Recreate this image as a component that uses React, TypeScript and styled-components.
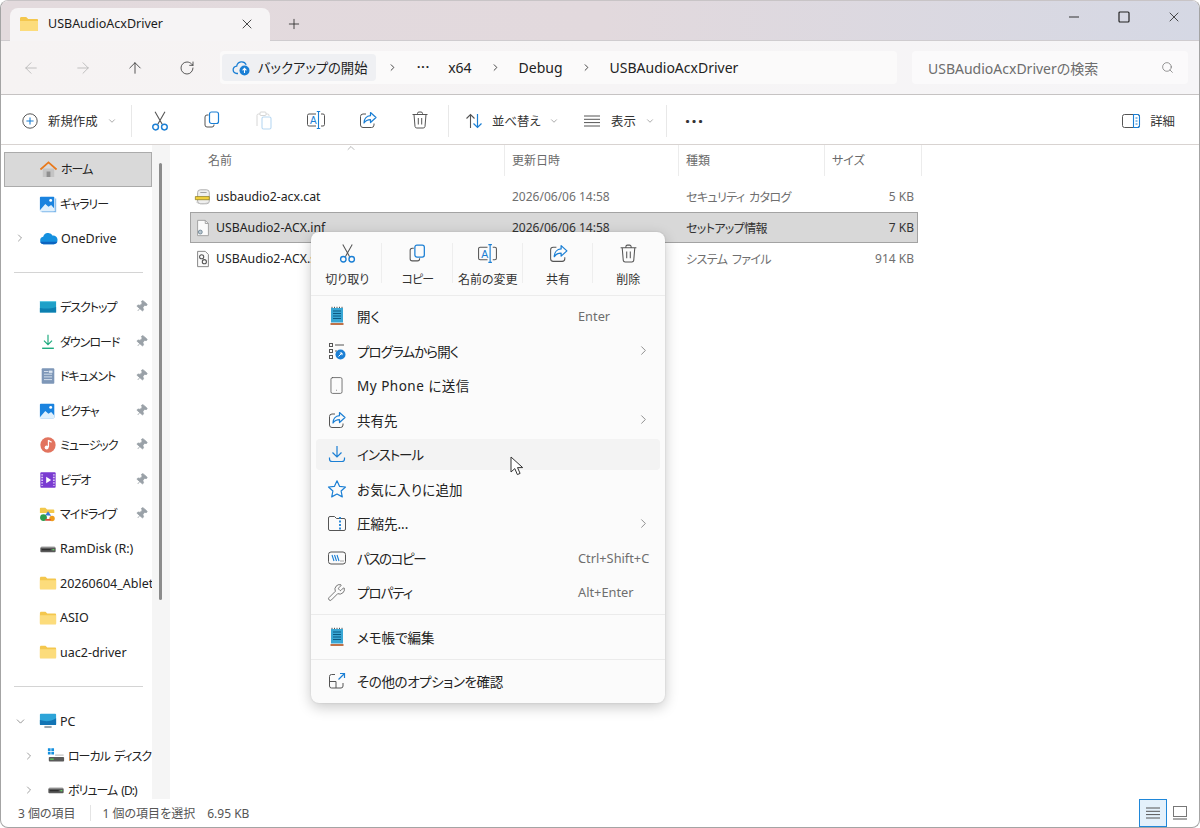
import React from "react";
import styled, { createGlobalStyle } from "styled-components";
import { ArrowLeft, ArrowRight, ArrowUp, RotateCw, Search, X, Plus, ChevronRight, ChevronDown, ChevronUp, Pin, Wrench, Smartphone } from "lucide-react";

const Global = createGlobalStyle`
  html, body { margin: 0; padding: 0; background: #fff; }
  body { font-family: "Noto Sans", "Noto Sans CJK JP", sans-serif; font-feature-settings: "palt"; color: #1c1c1c; }
  * { box-sizing: border-box; }
`;

const Win = styled.div`
  position: relative; width: 1200px; height: 828px; overflow: hidden; display: flex; flex-direction: column;
  border: 1px solid #a4a4a4; border-top-color: #c8c4c6; border-radius: 8px; background: #fff;
`;
const TitleBar = styled.div`
  height: 40px; flex: none; display: flex; align-items: flex-end; padding-left: 9px;
  background: linear-gradient(90deg, #e3dadd 0%, #e2d9dd 50%, #d5d8e4 100%);
  border-bottom: 1px solid #cfcccf;
`;
const Tab = styled.div`
  width: 260px; height: 33px; margin-bottom: -1px; display: flex; align-items: center; padding: 0 15px 2px 9px; gap: 9px;
  background: #f6f4f5; border-radius: 8px 8px 0 0; font-size: 12.5px;
`;
const TabTitle = styled.span` flex: 1; `;
const NewTab = styled.div` width: 34px; height: 33px; margin-left: 7px; display: flex; align-items: center; justify-content: center; color: #222; `;
const Spacer = styled.div` flex: 1; `;
const WinBtns = styled.div` align-self: flex-start; display: flex; height: 32px; `;
const WinBtn = styled.div` width: 50px; height: 32px; display: flex; align-items: center; justify-content: center; color: #222; `;

const AddrBar = styled.div`
  height: 54px; flex: none; display: flex; align-items: center; padding: 0 11px 0 4px;
  background: linear-gradient(90deg, #f6f3f3, #f6f5f7); border-bottom: 1px solid #c6c3c3;
`;
const NavBtn = styled.div<{ $off?: boolean }>`
  width: 52px; display: flex; justify-content: center; color: ${p => (p.$off ? "#b4b4b4" : "#333")};
`;
const Crumbs = styled.div`
  width: 677px; height: 33px; margin-left: 7px; display: flex; align-items: center; gap: 18px; padding-left: 2px;
  background: #fbfafa; border-radius: 4px; font-size: 14px; color: #222;
`;
const BackupPill = styled.div`
  width: 154px; height: 27px; margin-right: -7px; display: flex; align-items: center; gap: 6px; padding-left: 10px;
  background: #eff0f3; border-radius: 4px; font-size: 13.3px;
`;
const Dots = styled.span` font-weight: 700; letter-spacing: 1px; font-size: 12px; line-height: 1; padding-bottom: 2px; margin-left: 1px; `;
const SearchBox = styled.div`
  width: 276px; height: 33px; margin-left: 15px; display: flex; align-items: center; justify-content: space-between; padding: 0 14px 0 16px;
  background: #fbfafb; border-radius: 4px; font-size: 14px; color: #6d6d6d;
`;

const CmdBar = styled.div`
  height: 50px; flex: none; display: flex; align-items: center; padding: 2px 24px 0 11px;
  background: #fff; border-bottom: 1px solid #d8d3d1; font-size: 12.4px; color: #333;
`;
const CmdSep = styled.div` width: 1px; height: 32px; background: #e8e8e8; flex: none; `;
const CmdLabeled = styled.div<{ $w: number; $pl: number; $gap: number }>`
  width: ${p => p.$w}px; padding-left: ${p => p.$pl}px; display: flex; align-items: center; gap: ${p => p.$gap}px; flex: none;
`;
const CmdIconBtn = styled.div` width: 52px; flex: none; display: flex; justify-content: center; `;
const IconRun = styled.div` display: flex; padding: 0 2px; `;
const MoreBtn = styled.div` margin-left: 18px; font-size: 18px; font-weight: 700; letter-spacing: 1.5px; line-height: 1; `;
const SmallChev = styled.span` color: #9a9a9a; display: flex; `;
const Details = styled.div` display: flex; align-items: center; gap: 9px; `;

const Main = styled.div` flex: 1; min-height: 0; display: flex; `;
const Sidebar = styled.div`
  width: 151px; flex: none; overflow: hidden; padding-top: 7px; padding-left: 3px; font-size: 12.5px; color: #222;
`;
const SideRow = styled.div<{ $sel?: boolean; $indent?: boolean }>`
  position: relative; height: 34.5px; display: flex; align-items: center; white-space: nowrap;
  padding-left: ${p => (p.$indent ? 42 : 34)}px; gap: 3px;
  background: ${p => (p.$sel ? "#d9d9d9" : "transparent")};
  border: ${p => (p.$sel ? "1px solid #ababab" : "1px solid transparent")};
`;
const SideLabel = styled.span<{ $jp?: boolean }>`
  font-size: ${p => (p.$jp ? 12 : 12.5)}px; letter-spacing: ${p => (p.$jp ? "-1px" : "0")}; word-spacing: ${p => (p.$jp ? "2px" : "0")};
`;
const SideChev = styled.span<{ $indent?: boolean }>`
  position: absolute; left: ${p => (p.$indent ? 18 : 9)}px; top: 10px; display: flex; color: #777;
`;
const SidePin = styled.span`
  position: absolute; right: 3px; top: 9px; display: flex; color: #9aa1a8; transform: rotate(40deg);
`;
const SideSepRow = styled.div` height: 34.5px; display: flex; align-items: center; padding: 0 8px 0 10px; margin-right: 1px; `;
const SideLine = styled.div` flex: 1; height: 1px; background: #d4d4d4; `;
const ScrollStrip = styled.div` width: 18px; flex: none; background: #f5f5f5; padding: 18px 0 0 7px; `;
const Thumb = styled.div` width: 3px; height: 437px; background: #8b8b8b; border-radius: 2px; `;

const Content = styled.div` flex: 1; padding-left: 20px; font-size: 12px; color: #6b6b6b; `;
const HeadGrid = styled.div`
  position: relative; display: grid; grid-template-columns: 315px 174px 146px 97px; width: 732px; height: 32px;
`;
const HeadCell = styled.div<{ $first?: boolean }>`
  display: flex; align-items: center; height: 31px; padding-left: ${p => (p.$first ? 18 : 7)}px; border-right: 1px solid #ececec; padding-bottom: 2px;
`;
const SortMark = styled.span` position: absolute; left: 155px; top: -3px; display: flex; color: #888; `;
const FileRow = styled.div<{ $sel?: boolean }>`
  display: grid; grid-template-columns: 315px 174px 146px 93px; width: 728px; height: 31px; align-items: center;
  background: ${p => (p.$sel ? "#d8d8d8" : "transparent")};
  outline: ${p => (p.$sel ? "1px solid #a3a3a3" : "none")}; outline-offset: -1px;
  color: ${p => (p.$sel ? "#333" : "#6f6f6f")};
`;
const FileName = styled.div` display: flex; align-items: center; gap: 4px; padding-left: 4px; font-size: 12.3px; color: #222; white-space: nowrap; `;
const Cell = styled.div` padding-left: 7px; white-space: nowrap; `;
const TypeCell = styled(Cell)` letter-spacing: -.6px; word-spacing: 2px; `;
const SizeCell = styled.div` text-align: right; padding-right: 4px; `;
const RowsTop = styled.div` padding-top: 4px; `;

const StatusBar = styled.div`
  height: 28px; flex: none; display: flex; align-items: center; padding-left: 17px; font-size: 12px; color: #555;
`;
const StatusSep = styled.div` width: 1px; height: 16px; background: #e4e4e4; margin: 0 12px 0 14px; `;
const StatusGap = styled.span` margin-left: 12px; `;
const ViewGroup = styled.div` margin-left: auto; display: flex; align-items: center; margin-right: 12px; gap: 6px; height: 28px; `;
const ViewOn = styled.div`
  width: 28px; height: 28px; display: flex; align-items: center; justify-content: center;
  background: #e4f1fb; border: 1px solid #1f87d9;
`;

const Menu = styled.div`
  position: absolute; left: 310px; top: 231px; width: 354px; height: 471px; display: flex; flex-direction: column;
  background: #fbfbfb; border-radius: 8px; box-shadow: 0 4px 14px rgba(0,0,0,.22), 0 0 2px rgba(0,0,0,.12); font-size: 13.5px; color: #222;
`;
const MenuTop = styled.div` height: 64px; flex: none; display: flex; padding: 0 1px; border-bottom: 1px solid #ececec; `;
const TopBtn = styled.div<{ $sep?: boolean }>`
  position: relative; width: 70.3px; display: flex; flex-direction: column; align-items: center; padding-top: 11px; gap: 6px;
  font-size: 12px; color: #333;
  &::after { content: ""; display: ${p => (p.$sep ? "block" : "none")}; position: absolute; right: 0; top: 11px; width: 1px; height: 40px; background: #eeeeee; }
`;
const TopLabel = styled.span<{ $ls?: number }>` letter-spacing: ${p => p.$ls ?? 0}px; `;
const MenuList = styled.div` padding-top: 3px; `;
const MenuItem = styled.div<{ $hover?: boolean }>`
  height: 34.5px; margin: 0 5px; padding: 0 12px 0 11px; display: flex; align-items: center; gap: 11px; position: relative; border-radius: 4px;
  &::before { content: ""; display: ${p => (p.$hover ? "block" : "none")}; position: absolute; left: 0; right: 0; top: 2px; bottom: 2px; background: #f3f3f3; border-radius: 4px; }
  & > * { position: relative; }
`;
const MenuIconBox = styled.span` width: 19px; height: 20px; display: flex; align-items: center; justify-content: center; flex: none; `;
const MenuLabel = styled.span<{ $ls?: number }>` flex: 1; letter-spacing: ${p => p.$ls ?? 0}px; `;
const Shortcut = styled.span` font-size: 12.8px; color: #6e6e6e; width: 92px; padding-left: 12px; margin-right: -10px; white-space: nowrap; `;
const ChevBox = styled.span` color: #808080; display: flex; margin-right: -3px; `;
const MenuSep = styled.div` height: 1px; background: #ebebeb; margin: 4.5px 0; `;
const CursorMark = styled.svg` position: absolute; left: 509px; top: 455px; `;

const Ic = styled.svg.attrs<{ $s?: number }>(p => ({ width: p.$s ?? 20, height: p.$s ?? 20, viewBox: "0 0 20 20", fill: "none" }))<{ $s?: number }>`
  display: block; flex: none;
`;

type IP = { s?: number };
const B = "#1b7fd4";
const G = "#555";

const FolderI = ({ s = 18 }: IP) => (
  <Ic $s={s}><path d="M1 4.500C1 3.700 1.600 3 2.400 3h4.800l2 2H18c.6 0 1 .4 1 1v10c0 .6-.4 1-1 1H2c-.6 0-1-.4-1-1z" fill="#f4c74e" /><path d="M1 7h18v9c0 .6-.4 1-1 1H2c-.6 0-1-.4-1-1z" fill="#fcdc7c" /></Ic>
);
const BackupI = () => (
  <Ic $s={20}><path d="M6 15.500H5a3.700 3.700 0 0 1-.3-7.400A5 5 0 0 1 14.200 6.800" stroke={B} strokeWidth="1.300" /><circle cx="12.500" cy="12.500" r="5" fill={B} /><path d="M12.500 15V10.500M10.600 12.300l1.900-1.900 1.900 1.900" stroke="#fff" strokeWidth="1.100" /></Ic>
);
const CutI = ({ s = 22 }: IP) => (
  <Ic $s={s}><path d="M5.500 1.500 12 13M14.500 1.500 8 13" stroke="#555" strokeWidth="1" /><circle cx="6" cy="15.500" r="2.600" stroke={B} strokeWidth="1.300" /><circle cx="14" cy="15.500" r="2.600" stroke={B} strokeWidth="1.300" /></Ic>
);
const CopyI = ({ s = 20 }: IP) => (
  <Ic $s={s}><path d="M6.500 5H5a2 2 0 0 0-2 2v8a2 2 0 0 0 2 2h5a2 2 0 0 0 2-2v-.5" stroke="#555" strokeWidth="1" /><rect x="7.500" y="2" width="9" height="11.500" rx="2" stroke={B} strokeWidth="1.200" /></Ic>
);
const PasteI = ({ s = 20 }: IP) => (
  <Ic $s={s}><path d="M6 4H4.500A1.500 1.500 0 0 0 3 5.500V16" stroke="#d6d6d6" strokeWidth="1" /><rect x="6" y="2" width="6" height="3.500" rx="1" stroke="#d6d6d6" /><path d="M12 4h1.500A1.500 1.500 0 0 1 15 5.500V6" stroke="#d6d6d6" /><rect x="8" y="7" width="9" height="12" rx="1.500" stroke="#b8d8f2" strokeWidth="1.100" /></Ic>
);
const GlyphA = styled.text` font-family: "Liberation Sans", sans-serif; font-size: 10px; fill: #1b7fd4; `;
const RenameI = ({ s = 20 }: IP) => (
  <Ic $s={s}><path d="M10 4H3a1.500 1.500 0 0 0-1.500 1.500v9A1.500 1.500 0 0 0 3 16h7M15 4h2a1.500 1.500 0 0 1 1.500 1.500v9A1.500 1.500 0 0 1 17 16h-2" stroke="#555" strokeWidth="1" /><GlyphA x="4" y="14">A</GlyphA><path d="M12.500 1.500v17M10.800 1.500h3.400M10.800 18.500h3.400" stroke={B} strokeWidth="1.100" /></Ic>
);
const ShareI = ({ s = 20 }: IP) => (
  <Ic $s={s}><path d="M8 4H5a2.500 2.500 0 0 0-2.500 2.500v8.500A2.500 2.500 0 0 0 5 17.500h8.500A2.500 2.500 0 0 0 16 15v-1.500" stroke="#555" strokeWidth="1" /><path d="M12.500 2.500 18 7.500l-5.500 5V9.700c-3 0-5 1-6.500 3.300 0-4 2.500-7 6.500-7.300z" stroke={B} strokeWidth="1.200" strokeLinejoin="round" /></Ic>
);
const TrashI = ({ s = 20 }: IP) => (
  <Ic $s={s}><path d="M2.500 4.500h15M7.500 4.500V3.500a1.500 1.500 0 0 1 1.500-1.500h2a1.500 1.500 0 0 1 1.500 1.500v1M4 4.500l1 12a1.800 1.800 0 0 0 1.800 1.500h6.400a1.800 1.800 0 0 0 1.800-1.500l1-12M8.300 8v6.500M11.700 8v6.500" stroke="#555" strokeWidth="1" /></Ic>
);
const PlusCircle = () => (
  <Ic $s={18}><circle cx="10" cy="10" r="8" stroke="#555" strokeWidth="1.100" /><path d="M10 6v8M6 10h8" stroke={B} strokeWidth="1.200" /></Ic>
);
const SortI = () => (
  <Ic $s={20}><path d="M6.500 17V3.500M2.500 7.500l4-4 4 4" stroke="#555" strokeWidth="1.100" /><path d="M13.500 3v13.500M9.500 12.500l4 4 4-4" stroke={B} strokeWidth="1.200" /></Ic>
);
const LinesI = () => (
  <Ic $s={20}><path d="M2 5h16M2 8.300h16M2 11.600h16M2 15h16" stroke="#555" strokeWidth="1" /></Ic>
);
const DetailsI = () => (
  <Ic $s={20}><rect x="1.500" y="3.500" width="17" height="13" rx="2" stroke="#555" strokeWidth="1" /><path d="M12.500 3.500H16.500a2 2 0 0 1 2 2v9a2 2 0 0 1-2 2h-4z" stroke={B} strokeWidth="1.100" /><path d="M14.500 7h2M14.500 10h2M14.500 13h2" stroke={B} /></Ic>
);
const NotepadI = () => (
  <Ic $s={20}><rect x="4" y="2" width="12" height="14.500" fill="#39a6d4" /><path d="M6 5h8M6 7.500h8M6 10h8M6 12.500h8" stroke="#0b5a83" strokeWidth="1" /><path d="M5 2V.8M7.500 2V.8M10 2V.8M12.500 2V.8M15 2V.8" stroke="#555" /><path d="M3.500 18h13" stroke="#b2501c" strokeWidth="1.600" /></Ic>
);
const OpenWithI = () => (
  <Ic $s={20}><rect x="2.500" y="2.500" width="3" height="3" stroke="#555" /><rect x="2.500" y="8.500" width="3" height="3" stroke="#555" /><rect x="2.500" y="14.500" width="3" height="3" stroke="#555" /><path d="M8 4h9M8 10h2" stroke="#555" /><circle cx="13.500" cy="13.500" r="5" fill={B} /><path d="M11.500 15.500l3.500-3.500M12.800 12h2.200v2.200" stroke="#fff" /></Ic>
);
const DownloadI = () => (
  <Ic $s={20}><path d="M10 2v11M5.500 8.500 10 13l4.500-4.500" stroke={B} strokeWidth="1.200" /><path d="M2.500 13.500v1.500a2.500 2.500 0 0 0 2.500 2.500h10a2.500 2.500 0 0 0 2.500-2.500v-1.500" stroke={B} strokeWidth="1.200" /></Ic>
);
const StarI = () => (
  <Ic $s={20}><path d="M10 1.800l2.500 5.500 6 .7-4.400 4 1.200 5.900L10 15l-5.300 2.900 1.200-5.900-4.400-4 6-.7z" stroke={B} strokeWidth="1.200" strokeLinejoin="round" /></Ic>
);
const ZipI = () => (
  <Ic $s={20}><path d="M1.500 5A1.500 1.500 0 0 1 3 3.500h4.500l2 2H17A1.500 1.500 0 0 1 18.500 7v9A1.500 1.500 0 0 1 17 17.500H3A1.500 1.500 0 0 1 1.500 16z" stroke="#555" strokeWidth="1" /><path d="M13 4v13.500" stroke={B} strokeWidth="1.800" strokeDasharray="2 1.500" /></Ic>
);
const PathI = () => (
  <Ic $s={20}><rect x="1.500" y="4" width="17" height="12" rx="2.500" stroke="#555" strokeWidth="1" /><path d="M5 7l2 6M7.500 7l2 6M10 7l2 6" stroke={B} strokeWidth="1.100" /><path d="M13.500 13h1M15.500 13h1" stroke="#555" /></Ic>
);
const ExternalI = () => (
  <Ic $s={20}><path d="M8 3.500H4.500a2 2 0 0 0-2 2V15a2 2 0 0 0 2 2H14a2 2 0 0 0 2-2v-3M2.500 10.500H9v6.500" stroke="#555" strokeWidth="1" /><path d="M11.500 8.500 17.500 2.500M13 2.500h4.500V7" stroke={B} strokeWidth="1.200" /></Ic>
);

const HomeI = () => (
  <Ic $s={19}><path d="M4 9h12v9H4z" fill="#c4c4c4" /><path d="M8 12h4v6H8z" fill="#8f8f8f" /><path d="M1.500 10 10 2.500l8.500 7.500" stroke="#e87a1d" strokeWidth="1.800" /></Ic>
);
const PictureI = ({ s = 18, stack = false }: IP & { stack?: boolean }) => (
  <Ic $s={s}><rect x="1" y="2" width="16" height="16" rx="1" fill="#1a83df" />{stack && <path d="M18.500 4v14.500H3" stroke="#7fb8ea" strokeWidth="1.200" />}<path d="M1 17l6-7 3.500 3 3-2 3.500 4v2a1 1 0 0 1-1 1H2a1 1 0 0 1-1-1z" fill="#dff0fd" /><circle cx="13" cy="6" r="1.600" fill="#fff" /></Ic>
);
const CloudI = () => (
  <Ic $s={19}><path d="M5 16a4 4 0 0 1-.6-7.900A5.500 5.500 0 0 1 14.500 7a4.500 4.500 0 0 1 1 9z" fill="#1490df" /><path d="M1 13.500A4 4 0 0 0 5 16h11a4 4 0 0 0 3.500-2.500z" fill="#0c64c0" /></Ic>
);
const DesktopI = () => (
  <Ic $s={18}><rect x="1" y="4" width="18" height="12" fill="#1ea0c8" /><path d="M1 11c6 1 12 1 18-1v6H1z" fill="#0c7fb0" /><path d="M1 4h18" stroke="#54c5e2" /></Ic>
);
const GreenDl = () => (
  <Ic $s={18}><path d="M10 2v11M5.500 8.500 10 13l4.500-4.500" stroke="#1fab7f" strokeWidth="1.300" /><path d="M3.500 17h13" stroke="#1fab7f" strokeWidth="1.600" /></Ic>
);
const DocI = () => (
  <Ic $s={18}><rect x="3" y="1.500" width="14" height="17" rx="1" fill="#7e97b8" /><path d="M5.500 5h5M5.500 8h9M5.500 11h9M5.500 14h9" stroke="#dce6f1" strokeWidth="1" /><rect x="11" y="4" width="4" height="2.500" fill="#dce6f1" /></Ic>
);
const MusicI = () => (
  <Ic $s={18}><circle cx="10" cy="10" r="8.500" fill="#e2745f" /><path d="M10.500 4.500v8" stroke="#fff" strokeWidth="1.400" /><circle cx="8.500" cy="12.800" r="2.200" fill="#fff" /><path d="M10.500 4.500c1 1.500 2.500 1.800 3.500 2.500" stroke="#fff" strokeWidth="1.400" /></Ic>
);
const VideoI = () => (
  <Ic $s={18}><rect x="1.500" y="1.500" width="17" height="17" rx="1" fill="#7a3bd1" /><path d="M8 6.500v7l5.500-3.500z" fill="#fff" /><path d="M3.500 3.500v13M16.500 3.500v13" stroke="#d9c4f5" strokeWidth="2" strokeDasharray="1.500 1.500" /></Ic>
);
const GDriveI = () => (
  <Ic $s={18}><path d="M1 4a1 1 0 0 1 1-1h5l2 2h7a1 1 0 0 1 1 1v3H1z" fill="#f2c84b" /><circle cx="5" cy="14" r="3.800" fill="#2c9e4f" /><circle cx="14.500" cy="15" r="3" fill="#ee9c1c" /><path d="M7 11.500l3-4.500 3.500 5z" fill="#3a78d8" /><path d="M7 16.500h6" stroke="#d94a38" strokeWidth="2" /></Ic>
);
const DiskI = ({ s = 18 }: IP) => (
  <Ic $s={s}><rect x="1.500" y="8" width="17" height="5.500" rx="1" fill="#5a5a5a" /><path d="M2.500 7.500h15" stroke="#bcbcbc" strokeWidth="1" /><rect x="3" y="10" width="10" height="1.500" fill="#2e2e2e" /><rect x="15" y="10" width="2" height="1.500" fill="#5fd05f" /></Ic>
);
const PcI = () => (
  <Ic $s={18}><rect x="1" y="2" width="18" height="12.500" rx="1" fill="#2da4d8" /><path d="M1 9c6 2 12 2 18-2v6.500a1 1 0 0 1-1 1H2a1 1 0 0 1-1-1z" fill="#1274b4" /><rect x="6" y="15.500" width="8" height="2.300" fill="#9ba6ad" /></Ic>
);
const LocalDiskI = () => (
  <Ic $s={18}><path d="M1 1.500h3v3H1zM4.800 1.500h3v3h-3zM1 5.300h3v3H1zM4.800 5.300h3v3h-3z" fill="#1490df" /><rect x="2" y="11" width="17" height="5" rx="1" fill="#5a5a5a" /><path d="M9 9h9.500" stroke="#bcbcbc" strokeWidth="1.200" /><rect x="3.500" y="12.800" width="4" height="1.400" fill="#5fd05f" /></Ic>
);
const CatI = () => (
  <Ic $s={18}><rect x="4" y="2" width="13" height="15.500" rx="3" fill="#efefef" stroke="#a8a8a8" strokeWidth="1" /><path d="M1.500 9.500h15.500v3.500H1.500z" fill="#f2d13c" stroke="#8a7a20" strokeWidth=".8" /><path d="M7 5h7" stroke="#9a9a9a" /><path d="M2.500 15.500c3 2.500 10 2.500 14 .5" stroke="#c4c4c4" /></Ic>
);
const InfI = () => (
  <Ic $s={18}><path d="M4 1.500h8.500L16 5v13.500H4z" fill="#fbfbfb" stroke="#9c9c9c" strokeWidth="1" /><path d="M12.500 1.500V5H16" stroke="#9c9c9c" /><circle cx="7" cy="14.500" r="2.200" fill="#b8c6cf" stroke="#5c7484" strokeWidth=".8" /></Ic>
);
const SysI = () => (
  <Ic $s={18}><path d="M4 1.500h8.500L16 5v13.500H4z" fill="#fbfbfb" stroke="#7c7c7c" strokeWidth="1" /><circle cx="8.500" cy="7.500" r="2.300" stroke="#555" strokeWidth="1.200" /><circle cx="11.500" cy="13" r="2.300" stroke="#555" strokeWidth="1.200" /></Ic>
);

type SideItem = { label?: string; icon?: React.ReactNode; pin?: boolean; chev?: "r" | "d"; indent?: boolean; sel?: boolean };
const sideItems: SideItem[] = [
  { label: "ホーム", icon: <HomeI />, sel: true },
  { label: "ギャラリー", icon: <PictureI stack /> },
  { label: "OneDrive", icon: <CloudI />, chev: "r" },
  {},
  { label: "デスクトップ", icon: <DesktopI />, pin: true },
  { label: "ダウンロード", icon: <GreenDl />, pin: true },
  { label: "ドキュメント", icon: <DocI />, pin: true },
  { label: "ピクチャ", icon: <PictureI />, pin: true },
  { label: "ミュージック", icon: <MusicI />, pin: true },
  { label: "ビデオ", icon: <VideoI />, pin: true },
  { label: "マイドライブ", icon: <GDriveI />, pin: true },
  { label: "RamDisk (R:)", icon: <DiskI /> },
  { label: "20260604_Ablet", icon: <FolderI /> },
  { label: "ASIO", icon: <FolderI /> },
  { label: "uac2-driver", icon: <FolderI /> },
  {},
  { label: "PC", icon: <PcI />, chev: "d" },
  { label: "ローカル ディスク", icon: <LocalDiskI />, chev: "r", indent: true },
  { label: "ボリューム (D:)", icon: <DiskI />, chev: "r", indent: true },
];

const hasKana = (t: string) => /[\u3040-\u30ff]/.test(t);

const files = [
  { name: "usbaudio2-acx.cat", icon: <CatI />, type: "セキュリティ カタログ", size: "5 KB" },
  { name: "USBAudio2-ACX.inf", icon: <InfI />, type: "セットアップ情報", size: "7 KB", sel: true },
  { name: "USBAudio2-ACX.sys", icon: <SysI />, type: "システム ファイル", size: "914 KB" },
];

const topBtns = [
  { label: "切り取り", icon: <CutI s={21} /> },
  { label: "コピー", icon: <CopyI s={21} />, ls: -1 },
  { label: "名前の変更", icon: <RenameI s={21} /> },
  { label: "共有", icon: <ShareI s={21} /> },
  { label: "削除", icon: <TrashI s={21} /> },
];

type MI = { label: string; icon: React.ReactNode; key?: string; arrow?: boolean; hover?: boolean; ls?: number };
const group1: MI[] = [
  { label: "開く", icon: <NotepadI />, key: "Enter" },
  { label: "プログラムから開く", icon: <OpenWithI />, arrow: true, ls: -0.9 },
  { label: "My Phone に送信", icon: <Smartphone size={19} strokeWidth={1} color={G} />, ls: 0.5 },
  { label: "共有先", icon: <ShareI />, arrow: true },
  { label: "インストール", icon: <DownloadI />, hover: true, ls: -1 },
  { label: "お気に入りに追加", icon: <StarI />, ls: 0.2 },
  { label: "圧縮先...", icon: <ZipI />, arrow: true },
  { label: "パスのコピー", icon: <PathI />, key: "Ctrl+Shift+C", ls: -1.4 },
  { label: "プロパティ", icon: <Wrench size={19} strokeWidth={1} color={G} />, key: "Alt+Enter", ls: -1 },
];

const Row = ({ m }: { m: MI }) => (
  <MenuItem $hover={m.hover}>
    <MenuIconBox>{m.icon}</MenuIconBox>
    <MenuLabel $ls={m.ls}>{m.label}</MenuLabel>
    {m.key && <Shortcut>{m.key}</Shortcut>}
    {m.arrow && <ChevBox><ChevronRight size={15} strokeWidth={1.4} /></ChevBox>}
  </MenuItem>
);

export default function App() {
  return (
    <Win>
      <Global />
      <TitleBar>
        <Tab>
          <FolderI s={20} />
          <TabTitle>USBAudioAcxDriver</TabTitle>
          <X size={16} strokeWidth={1.2} />
        </Tab>
        <NewTab><Plus size={16} strokeWidth={1.2} /></NewTab>
        <Spacer />
        <WinBtns>
          <WinBtn><svg width="12" height="12" viewBox="0 0 12 12"><path d="M1 6h10" stroke="#333" /></svg></WinBtn>
          <WinBtn><svg width="12" height="12" viewBox="0 0 12 12"><rect x="1" y="1" width="10" height="10" rx="1" fill="none" stroke="#222" strokeWidth="1.200" /></svg></WinBtn>
          <WinBtn><X size={16} strokeWidth={1.2} /></WinBtn>
        </WinBtns>
      </TitleBar>
      <AddrBar>
        <NavBtn $off><ArrowLeft size={18} strokeWidth={1.1} /></NavBtn>
        <NavBtn $off><ArrowRight size={18} strokeWidth={1.1} /></NavBtn>
        <NavBtn><ArrowUp size={18} strokeWidth={1.1} /></NavBtn>
        <NavBtn><RotateCw size={16} strokeWidth={1.2} /></NavBtn>
        <Crumbs>
          <BackupPill><BackupI /><span>バックアップの開始</span></BackupPill>
          <ChevronRight size={11} strokeWidth={1.8} />
          <Dots>···</Dots>
          <span>x64</span>
          <ChevronRight size={11} strokeWidth={1.8} />
          <span>Debug</span>
          <ChevronRight size={11} strokeWidth={1.8} />
          <span>USBAudioAcxDriver</span>
        </Crumbs>
        <SearchBox>
          <span>USBAudioAcxDriverの検索</span>
          <Search size={13} strokeWidth={1.3} />
        </SearchBox>
      </AddrBar>
      <CmdBar>
        <CmdLabeled $w={119} $pl={9} $gap={9}>
          <PlusCircle />
          <span>新規作成</span>
          <SmallChev><ChevronDown size={10} /></SmallChev>
        </CmdLabeled>
        <CmdSep />
        <IconRun>
          <CmdIconBtn><CutI /></CmdIconBtn>
          <CmdIconBtn><CopyI /></CmdIconBtn>
          <CmdIconBtn><PasteI /></CmdIconBtn>
          <CmdIconBtn><RenameI /></CmdIconBtn>
          <CmdIconBtn><ShareI /></CmdIconBtn>
          <CmdIconBtn><TrashI /></CmdIconBtn>
        </IconRun>
        <CmdSep />
        <CmdLabeled $w={123} $pl={15} $gap={8}>
          <SortI />
          <span>並べ替え</span>
          <SmallChev><ChevronDown size={10} /></SmallChev>
        </CmdLabeled>
        <CmdLabeled $w={94} $pl={10} $gap={9}>
          <LinesI />
          <span>表示</span>
          <SmallChev><ChevronDown size={10} /></SmallChev>
        </CmdLabeled>
        <CmdSep />
        <MoreBtn>···</MoreBtn>
        <Spacer />
        <Details><DetailsI /><span>詳細</span></Details>
      </CmdBar>
      <Main>
        <Sidebar>
          {sideItems.map((it, i) =>
            it.label ? (
              <SideRow key={i} $sel={it.sel} $indent={it.indent}>
                {it.chev && (
                  <SideChev $indent={it.indent}>
                    {it.chev === "r" ? <ChevronRight size={12} strokeWidth={1.4} /> : <ChevronDown size={13} strokeWidth={1.4} />}
                  </SideChev>
                )}
                {it.icon}
                <SideLabel $jp={hasKana(it.label)}>{it.label}</SideLabel>
                {it.pin && <SidePin><Pin size={13} strokeWidth={1.4} fill="#9aa1a8" /></SidePin>}
              </SideRow>
            ) : (
              <SideSepRow key={i}><SideLine /></SideSepRow>
            )
          )}
        </Sidebar>
        <ScrollStrip><Thumb /></ScrollStrip>
        <Content>
          <HeadGrid>
            <HeadCell $first>名前</HeadCell>
            <HeadCell>更新日時</HeadCell>
            <HeadCell>種類</HeadCell>
            <HeadCell>サイズ</HeadCell>
            <SortMark><ChevronUp size={12} strokeWidth={1.2} /></SortMark>
          </HeadGrid>
          <RowsTop>
            {files.map(f => (
              <FileRow key={f.name} $sel={f.sel}>
                <FileName>{f.icon}<span>{f.name}</span></FileName>
                <Cell>2026/06/06 14:58</Cell>
                <TypeCell>{f.type}</TypeCell>
                <SizeCell>{f.size}</SizeCell>
              </FileRow>
            ))}
          </RowsTop>
        </Content>
      </Main>
      <StatusBar>
        <span>3 個の項目</span>
        <StatusSep />
        <span>1 個の項目を選択</span>
        <StatusGap>6.95 KB</StatusGap>
        <ViewGroup>
          <ViewOn><svg width="14" height="14" viewBox="0 0 14 14"><path d="M0 2h14M0 5.300h14M0 8.600h14M0 12h14" stroke="#555" /></svg></ViewOn>
          <svg width="14" height="14" viewBox="0 0 14 14"><rect x=".5" y=".5" width="13" height="10" fill="none" stroke="#777" /><path d="M0 13h14" stroke="#555" /></svg>
        </ViewGroup>
      </StatusBar>
      <Menu>
        <MenuTop>
          {topBtns.map((b, i) => (
            <TopBtn key={b.label} $sep={i < 4}>{b.icon}<TopLabel $ls={b.ls}>{b.label}</TopLabel></TopBtn>
          ))}
        </MenuTop>
        <MenuList>
          {group1.map(m => <Row key={m.label} m={m} />)}
          <MenuSep />
          <Row m={{ label: "メモ帳で編集", icon: <NotepadI /> }} />
          <MenuSep />
          <Row m={{ label: "その他のオプションを確認", icon: <ExternalI />, ls: -0.4 }} />
        </MenuList>
      </Menu>
      <CursorMark width="15" height="20" viewBox="0 0 15 20">
        <path d="M1 1v15l3.800-3.400 2.600 6 2.700-1.200-2.600-5.800h5.200z" fill="#fff" stroke="#333" strokeWidth="1" strokeLinejoin="round" />
      </CursorMark>
    </Win>
  );
}
